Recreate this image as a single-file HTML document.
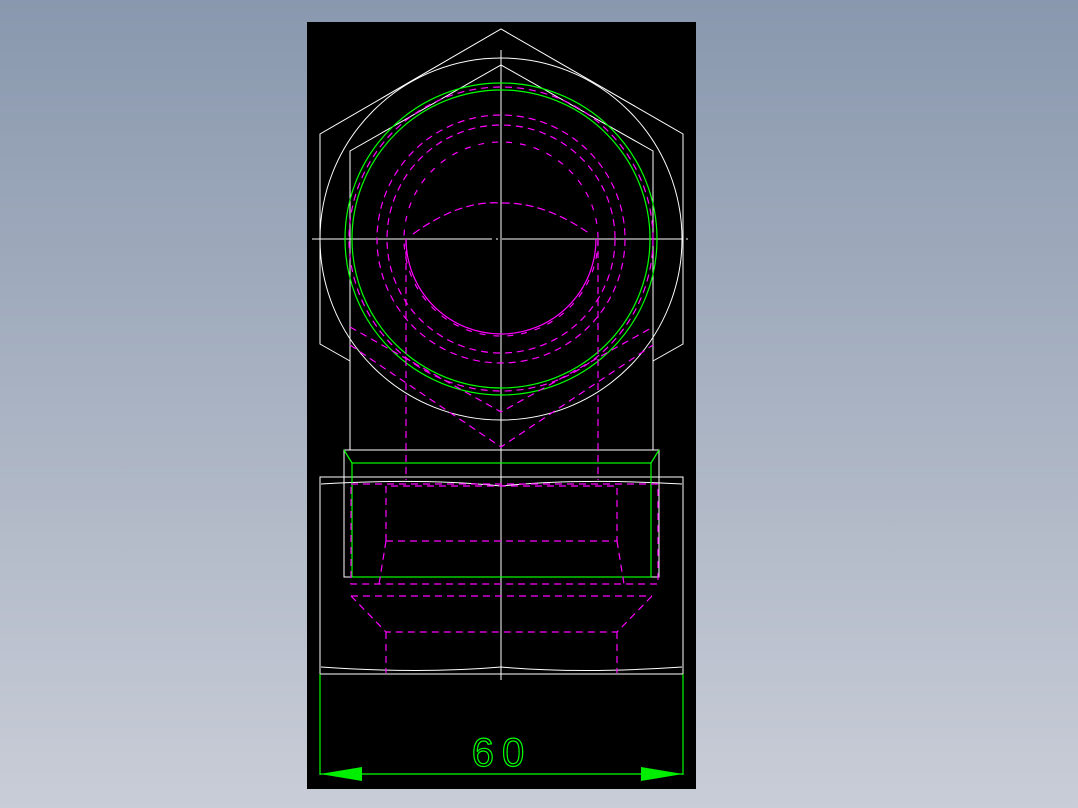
<!DOCTYPE html>
<html><head><style>
html,body{margin:0;padding:0;width:1078px;height:808px;overflow:hidden;background:linear-gradient(#8998ae,#c9cdd7);}
svg{position:absolute;left:0;top:0}
</style></head><body>
<svg width="1078" height="808" viewBox="0 0 1078 808">
<rect x="307" y="22" width="389" height="767" fill="#000"/>
<g fill="none" stroke="#fff" stroke-width="1">
<polyline points="350,361 320,344 320,134 501,29 683,134 683,344 653,361"/>
<circle cx="501" cy="239" r="181"/>
<polyline points="350,450 350,151 501,65 653,151 653,450"/>
<rect x="344" y="450" width="315" height="127"/>
<rect x="320" y="477" width="363" height="197"/>
<path d="M321,484 Q420,478 501,486 Q580,478 682,484"/>
<path d="M321,667 Q420,674 501,667 Q580,674 682,667"/>
<line x1="312" y1="239" x2="692" y2="239" stroke-dasharray="180 4 2 4"/>
<line x1="501" y1="50" x2="501" y2="680"/>
</g>
<g fill="none" stroke="#00ff00" stroke-width="1.2">
<circle cx="501" cy="239" r="156"/>
<circle cx="501" cy="239" r="149"/>
<rect x="352" y="463" width="299" height="114"/>
<line x1="344" y1="450" x2="352" y2="463"/><line x1="659" y1="450" x2="651" y2="463"/>
<line x1="320" y1="674" x2="320" y2="775"/><line x1="683" y1="674" x2="683" y2="775"/>
<line x1="320" y1="774" x2="683" y2="774"/>
<text x="502" y="766" font-family="Liberation Sans Narrow,Liberation Sans,sans-serif" font-size="40" text-anchor="middle" fill="none" stroke="#00ff00" stroke-width="1.2" letter-spacing="8">60</text>
</g>
<polygon points="320,774 362,767 362,781" fill="#00ee00"/>
<polygon points="683,774 641,767 641,781" fill="#00ee00"/>
<g fill="none" stroke="#ff00ff" stroke-width="1.2">
<path d="M406,239 A95,95 0 0 0 596,239"/>
<path d="M413,234 Q460,200 501,203 Q545,202 590,234" stroke-dasharray="8 4"/>
<g stroke-dasharray="7 5">
<circle cx="501" cy="239" r="152"/>
<circle cx="501" cy="239" r="124"/>
<circle cx="501" cy="239" r="114"/>
<circle cx="501" cy="239" r="97" stroke-dasharray="6 8"/>
<polyline points="350,327 501,412 653,327"/>
<polyline points="350,345 501,447 653,345"/>
<line x1="406" y1="239" x2="406" y2="480"/>
<line x1="598" y1="239" x2="598" y2="480"/>
<rect x="351" y="484" width="307" height="100"/>
<polyline points="386,541 386,486 617,486 617,541"/>
<line x1="386" y1="541" x2="617" y2="541"/>
<polyline points="386,541 379,584"/><polyline points="617,541 624,584"/>
<line x1="351" y1="596" x2="652" y2="596"/>
<polyline points="351,596 386,632 617,632 652,596"/>
<line x1="386" y1="632" x2="386" y2="673"/>
<line x1="617" y1="632" x2="617" y2="673"/>
</g></g>
</svg>
</body></html>
